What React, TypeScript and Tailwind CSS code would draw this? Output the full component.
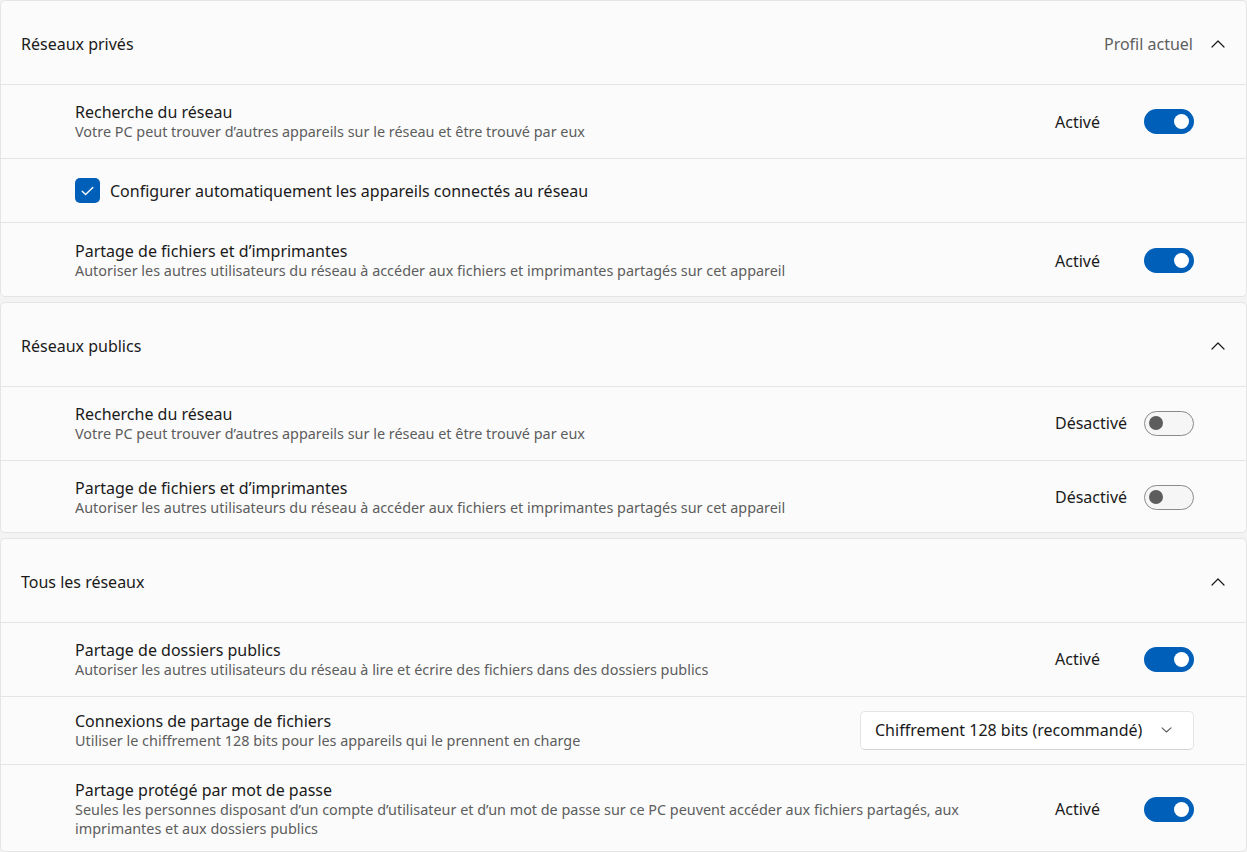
import { ReactNode } from "react";

const font = { fontFamily: '"Segoe UI", "Noto Sans", "Open Sans", sans-serif' };

function ChevronUp() {
  return (
    <svg width="14" height="8" viewBox="0 0 14 8" fill="none">
      <path d="M1 7L7 1L13 7" stroke="#1a1a1a" strokeWidth="1.2" strokeLinecap="round" strokeLinejoin="round" />
    </svg>
  );
}

function ChevronDown() {
  return (
    <svg width="11" height="6" viewBox="0 0 11 6" fill="none">
      <path d="M1 0.8L5.5 5L10 0.8" stroke="#5d5d5d" strokeWidth="1.1" strokeLinecap="round" strokeLinejoin="round" />
    </svg>
  );
}

function Toggle({ on }: { on: boolean }) {
  return (
    <div className="flex w-[139px] items-center justify-between">
      <span className="text-[16px] text-[#1a1a1a]">{on ? "Activé" : "Désactivé"}</span>
      {on ? (
        <div className="flex h-[25px] w-[50px] items-center justify-end rounded-full bg-[#005fb8] pr-[5px]">
          <div className="h-[15px] w-[15px] rounded-full bg-white" />
        </div>
      ) : (
        <div className="flex h-[25px] w-[50px] items-center rounded-full border border-[#8a8a8a] bg-[#f6f6f6] pl-[4px]">
          <div className="h-[14px] w-[14px] rounded-full bg-[#5d5d5d]" />
        </div>
      )}
    </div>
  );
}

function Header({ title, extra }: { title: string; extra?: string }) {
  return (
    <div className="flex h-[83px] items-center justify-between pl-[20px] pr-[21px] pt-[3px]">
      <span className="text-[16px] text-[#1a1a1a]">{title}</span>
      <div className="flex items-center gap-[18px]">
        {extra && <span className="text-[16px] text-[#5f5f5f]">{extra}</span>}
        <ChevronUp />
      </div>
    </div>
  );
}

function Row({
  title,
  desc,
  h,
  children,
}: {
  title: string;
  desc: ReactNode;
  h: string;
  children: ReactNode;
}) {
  return (
    <div className={`flex items-center justify-between border-t border-[#e5e5e5] pl-[74px] pr-[52px] ${h}`}>
      <div className="flex max-w-[900px] flex-col">
        <span className="text-[16px] leading-[20px] text-[#1a1a1a]">{title}</span>
        <span className="text-[14.4px] leading-[19px] text-[#5d5d5d]">{desc}</span>
      </div>
      {children}
    </div>
  );
}

function Card({ children }: { children: ReactNode }) {
  return (
    <div className="overflow-hidden rounded-[5px] border border-[#e5e5e5] bg-[#fbfbfb]">{children}</div>
  );
}

export default function App() {
  return (
    <div className="flex h-[852px] w-full flex-col gap-[5px] overflow-hidden bg-[#f3f3f3]" style={font}>
      <Card>
        <Header title="Réseaux privés" extra="Profil actuel" />
        <Row
          h="h-[74px]"
          title="Recherche du réseau"
          desc="Votre PC peut trouver d’autres appareils sur le réseau et être trouvé par eux"
        >
          <Toggle on />
        </Row>
        <div className="flex h-[64px] items-center gap-[10px] border-t border-[#e5e5e5] pl-[74px]">
          <div className="flex h-[25px] w-[25px] items-center justify-center rounded-[5px] bg-[#005fb8]">
            <svg width="13" height="10" viewBox="0 0 13 10" fill="none">
              <path d="M1.2 5.2L4.6 8.4L11.8 1.4" stroke="white" strokeWidth="1.4" strokeLinecap="round" strokeLinejoin="round" />
            </svg>
          </div>
          <span className="text-[16px] text-[#1a1a1a]">Configurer automatiquement les appareils connectés au réseau</span>
        </div>
        <Row
          h="h-[76px]"
          title="Partage de fichiers et d’imprimantes"
          desc="Autoriser les autres utilisateurs du réseau à accéder aux fichiers et imprimantes partagés sur cet appareil"
        >
          <Toggle on />
        </Row>
      </Card>

      <Card>
        <Header title="Réseaux publics" />
        <Row
          h="h-[74px]"
          title="Recherche du réseau"
          desc="Votre PC peut trouver d’autres appareils sur le réseau et être trouvé par eux"
        >
          <Toggle on={false} />
        </Row>
        <Row
          h="h-[74px]"
          title="Partage de fichiers et d’imprimantes"
          desc="Autoriser les autres utilisateurs du réseau à accéder aux fichiers et imprimantes partagés sur cet appareil"
        >
          <Toggle on={false} />
        </Row>
      </Card>

      <Card>
        <Header title="Tous les réseaux" />
        <Row
          h="h-[74px]"
          title="Partage de dossiers publics"
          desc="Autoriser les autres utilisateurs du réseau à lire et écrire des fichiers dans des dossiers publics"
        >
          <Toggle on />
        </Row>
        <Row
          h="h-[68px]"
          title="Connexions de partage de fichiers"
          desc="Utiliser le chiffrement 128 bits pour les appareils qui le prennent en charge"
        >
          <div className="flex h-[39px] w-[334px] items-center justify-between rounded-[5px] border border-[#e5e5e5] border-b-[#d4d4d4] bg-white pl-[14px] pr-[21px]">
            <span className="text-[16px] text-[#1a1a1a]">Chiffrement 128 bits (recommandé)</span>
            <ChevronDown />
          </div>
        </Row>
        <Row
          h="h-[90px]"
          title="Partage protégé par mot de passe"
          desc="Seules les personnes disposant d’un compte d’utilisateur et d’un mot de passe sur ce PC peuvent accéder aux fichiers partagés, aux imprimantes et aux dossiers publics"
        >
          <Toggle on />
        </Row>
      </Card>
    </div>
  );
}
